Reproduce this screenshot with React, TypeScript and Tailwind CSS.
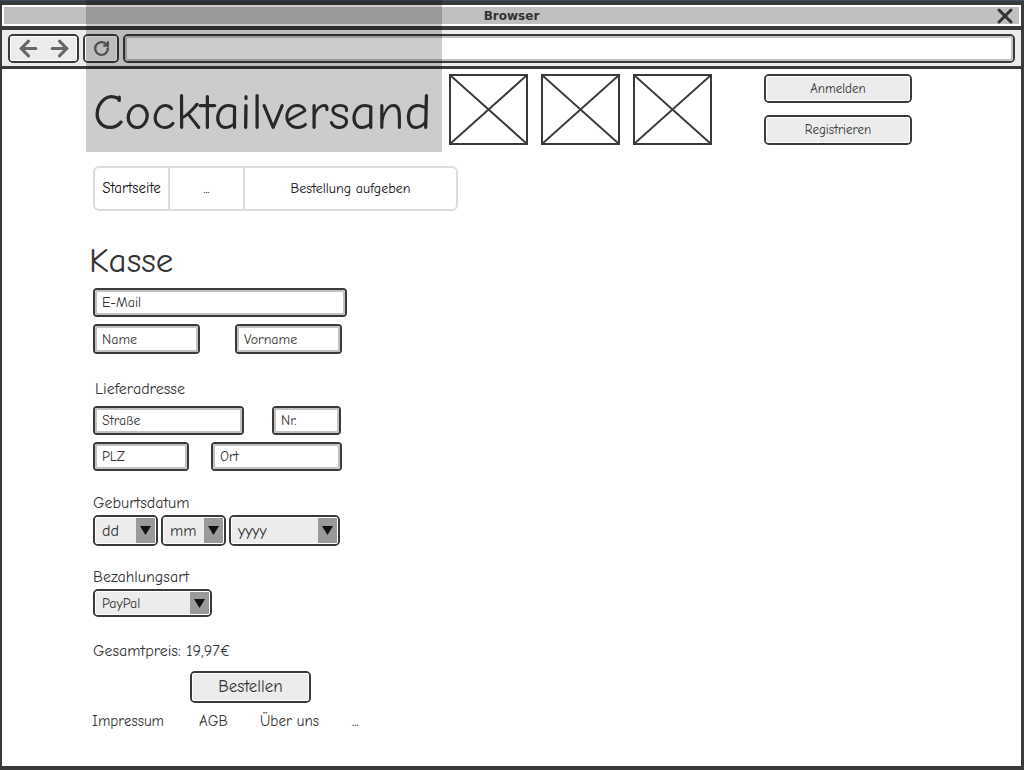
import React from 'react';
import { ArrowLeft, ArrowRight, RotateCw, X } from 'lucide-react';

const font = { fontFamily: '"Comic Sans MS", "Comic Neue", Lato, "Open Sans", sans-serif' };

function Field({ label, w, h = 29 }: { label: string; w: number; h?: number }) {
  return (
    <div className="border-2 border-[#3a3a3a] rounded-[4px] overflow-hidden" style={{ width: w, height: h }}>
      <div className="h-full border-2 border-[#c2c2c2] bg-white flex items-center px-[5px] text-[14px] text-[#333]">
        {label}
      </div>
    </div>
  );
}

function Select({ value, w, h = 31, size = 'text-[16px]' }: { value: string; w: number; h?: number; size?: string }) {
  return (
    <div className="border-2 border-[#3a3a3a] rounded-[5px] overflow-hidden" style={{ width: w, height: h }}>
      <div className="h-full border border-white bg-[#ececec] flex items-stretch">
        <div className={`flex-1 flex items-center pl-[6px] text-[#333] ${size}`}>{value}</div>
        <div className="w-[19px] bg-[#9a9a9a] flex items-center justify-center">
          <svg width="11" height="9" viewBox="0 0 11 9">
            <polygon points="0,0 11,0 5.5,9" fill="#111" />
          </svg>
        </div>
      </div>
    </div>
  );
}

function Button({ label, w, h, size = 'text-[13px]' }: { label: string; w: number; h: number; size?: string }) {
  return (
    <div className="border-2 border-[#3a3a3a] rounded-[5px] overflow-hidden" style={{ width: w, height: h }}>
      <div className={`h-full border border-white bg-[#ececec] flex items-center justify-center text-[#333] ${size}`}>
        {label}
      </div>
    </div>
  );
}

function ImageBox() {
  return (
    <div className="w-[79px] h-[71px] border-2 border-[#3a3a3a] bg-white">
      <svg width="100%" height="100%" viewBox="0 0 100 100" preserveAspectRatio="none">
        <line x1="0" y1="0" x2="100" y2="100" stroke="#3a3a3a" strokeWidth="2" vectorEffect="non-scaling-stroke" />
        <line x1="100" y1="0" x2="0" y2="100" stroke="#3a3a3a" strokeWidth="2" vectorEffect="non-scaling-stroke" />
      </svg>
    </div>
  );
}

function Label({ text, mt }: { text: string; mt: number }) {
  return (
    <div className="h-[20px] flex items-center text-[16px] text-[#333]" style={{ marginTop: mt }}>
      {text}
    </div>
  );
}

export default function App() {
  return (
    <div className="relative w-[1024px] h-[770px] bg-[#3a3a3a] flex flex-col overflow-hidden" style={font}>
      <div className="h-[1px] bg-[#3d4c5e]" />
      <div className="flex-1 flex flex-col ml-[2px] mr-[3px] mb-[4px] mt-[4px] bg-white">
        {/* title bar */}
        <div className="h-[21px] border-2 border-white bg-[#c0c0c0] relative flex items-center justify-center">
          <span className="text-[12px] font-bold text-[#333]" style={{ fontFamily: '"DejaVu Sans", sans-serif' }}>Browser</span>
          <X className="absolute right-[2px] top-[-3px] text-[#333]" size={24} strokeWidth={3} />
        </div>
        <div className="h-[4px] bg-[#3a3a3a]" />
        {/* toolbar */}
        <div className="h-[36px] bg-[#ececec] flex items-center pl-[6px] pr-[6px] gap-[4px]">
          <div className="w-[71px] h-[29px] border-2 border-[#3a3a3a] rounded-[5px] overflow-hidden">
            <div className="h-full border border-white bg-[#ececec] flex items-center justify-center gap-[6px] text-[#666]">
              <ArrowLeft size={25} strokeWidth={3} />
              <ArrowRight size={25} strokeWidth={3} />
            </div>
          </div>
          <div className="w-[36px] h-[29px] border-2 border-[#3a3a3a] rounded-[5px] overflow-hidden">
            <div className="h-full border border-white bg-[#ececec] flex items-center justify-center text-[#666]">
              <RotateCw size={17} strokeWidth={3.4} />
            </div>
          </div>
          <div className="flex-1 h-[29px] border-2 border-[#3a3a3a] rounded-[5px] overflow-hidden">
            <div className="h-full border-2 border-[#c2c2c2] bg-white" />
          </div>
        </div>
        <div className="h-[3px] bg-[#3a3a3a]" />

        {/* page */}
        <div className="flex-1 flex flex-col pl-[91px]">
          <div className="flex items-start pt-[4px]">
            <div className="w-[356px] h-[72px] flex items-center">
              <span className="text-[51px] leading-none text-[#333] pt-[6px]">Cocktailversand</span>
            </div>
            <div className="flex gap-[13px] pt-[1px]">
              <ImageBox />
              <ImageBox />
              <ImageBox />
            </div>
            <div className="ml-[52px] pt-[1px] flex flex-col gap-[12px]">
              <Button label="Anmelden" w={148} h={29} />
              <Button label="Registrieren" w={148} h={30} />
            </div>
          </div>

          <div className="mt-[21px] w-[365px] h-[45px] border-2 border-[#dcdcdc] rounded-[6px] flex text-[14px] text-[#111]">
            <div className="w-[75px] border-r-2 border-[#dcdcdc] flex items-center justify-center text-[15px]">Startseite</div>
            <div className="w-[75px] border-r-2 border-[#dcdcdc] flex items-center justify-center">...</div>
            <div className="flex-1 flex items-center justify-center">Bestellung aufgeben</div>
          </div>

          <div className="mt-[30px] -ml-[4px] h-[40px] flex items-center text-[35px] text-[#333]">Kasse</div>

          <div className="mt-[7px]"><Field label="E-Mail" w={254} /></div>
          <div className="mt-[7px] flex gap-[35px]">
            <Field label="Name" w={107} h={30} />
            <Field label="Vorname" w={107} h={30} />
          </div>

          <div className="pl-[2px]"><Label text="Lieferadresse" mt={25} /></div>
          <div className="mt-[7px] flex gap-[28px]">
            <Field label="Straße" w={151} />
            <Field label="Nr." w={69} />
          </div>
          <div className="mt-[7px] flex gap-[22px]">
            <Field label="PLZ" w={96} />
            <Field label="Ort" w={131} />
          </div>

          <Label text="Geburtsdatum" mt={22} />
          <div className="mt-[2px] flex gap-[3px]">
            <Select value="dd" w={65} />
            <Select value="mm" w={65} />
            <Select value="yyyy" w={111} />
          </div>

          <Label text="Bezahlungsart" mt={21} />
          <div className="mt-[2px]">
            <Select value="PayPal" w={119} h={28} size="text-[14px]" />
          </div>

          <Label text="Gesamtpreis: 19,97€" mt={24} />
          <div className="mt-[10px] ml-[97px]">
            <Button label="Bestellen" w={121} h={32} size="text-[17px]" />
          </div>

          <div className="mt-[8px] h-[20px] flex items-center text-[15px] text-[#333] -ml-[1px]">
            <span className="w-[107px]">Impressum</span>
            <span className="w-[61px]">AGB</span>
            <span className="w-[92px]">Über uns</span>
            <span>...</span>
          </div>
        </div>
      </div>

      {/* translucent highlight over header */}
      <div className="absolute left-[86px] top-0 w-[356px] h-[152px] bg-black/20 pointer-events-none" />
    </div>
  );
}
